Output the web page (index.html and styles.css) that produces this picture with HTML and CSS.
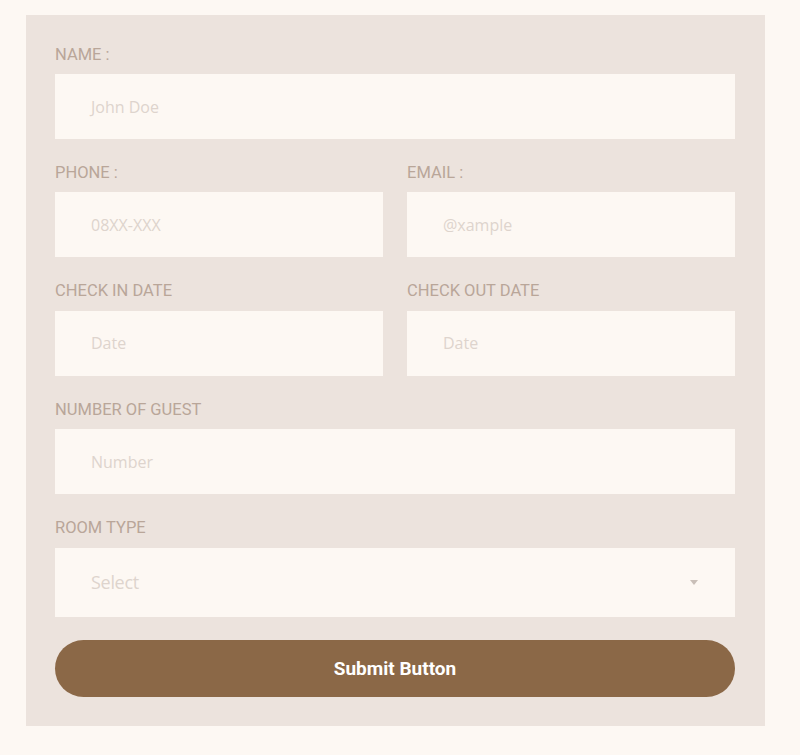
FILE: index.html
```html
<!DOCTYPE html>
<html>
<head>
<meta charset="utf-8">
<link rel="stylesheet" href="styles.css">
</head>
<body>
<form class="panel">
  <div class="field">
    <label class="label">NAME :</label>
    <div class="input">John Doe</div>
  </div>
  <div class="row">
    <div class="field">
      <label class="label">PHONE :</label>
      <div class="input">08XX-XXX</div>
    </div>
    <div class="field">
      <label class="label">EMAIL :</label>
      <div class="input">@xample</div>
    </div>
  </div>
  <div class="row">
    <div class="field">
      <label class="label">CHECK IN DATE</label>
      <div class="input">Date</div>
    </div>
    <div class="field">
      <label class="label">CHECK OUT DATE</label>
      <div class="input">Date</div>
    </div>
  </div>
  <div class="field">
    <label class="label">NUMBER OF GUEST</label>
    <div class="input">Number</div>
  </div>
  <div class="field">
    <label class="label">ROOM TYPE</label>
    <div class="select"><span>Select</span><span class="arrow"></span></div>
  </div>
  <button type="button" class="submit">Submit Button</button>
</form>
</body>
</html>
```
FILE: styles.css
```css
html, body {
  margin: 0;
  background: #fdf8f3;
}
body {
  padding: 15px 0 0 26px;
}
.panel {
  width: 739px;
  box-sizing: border-box;
  background: #ece3dd;
  padding: 28px 30px 29px 29px;
  display: flex;
  flex-direction: column;
  gap: 22.4px;
}
.row {
  display: grid;
  grid-template-columns: 1fr 1fr;
  gap: 24px;
}
.field {
  display: flex;
  flex-direction: column;
}
.label {
  font-family: Roboto, "Liberation Sans", sans-serif;
  font-size: 16.5px;
  line-height: 20px;
  color: #b9a699;
  margin-top: 1.5px;
  margin-bottom: 9.5px;
}
.input {
  height: 65px;
  background: #fdf8f3;
  box-sizing: border-box;
  padding-left: 36px;
  display: flex;
  align-items: center;
  font-family: "Open Sans", "Noto Sans", sans-serif;
  font-size: 16px;
  color: #ded4cd;
}
.select {
  height: 69px;
  background: #fdf8f3;
  padding: 0 37px 0 36px;
  display: flex;
  align-items: center;
  justify-content: space-between;
  font-family: "Open Sans", "Noto Sans", sans-serif;
  font-size: 18px;
  color: #ded4cd;
  letter-spacing: -0.3px;
}
.arrow {
  width: 0;
  height: 0;
  border-left: 4px solid transparent;
  border-right: 4px solid transparent;
  border-top: 5px solid #c9bfb8;
}
.submit {
  height: 57px;
  margin-top: 1.5px;
  border: none;
  border-radius: 29px;
  background: #8b6847;
  color: #fff;
  font-family: Roboto, "Liberation Sans", sans-serif;
  font-weight: 700;
  font-size: 19px;
  padding: 0;
}
```
